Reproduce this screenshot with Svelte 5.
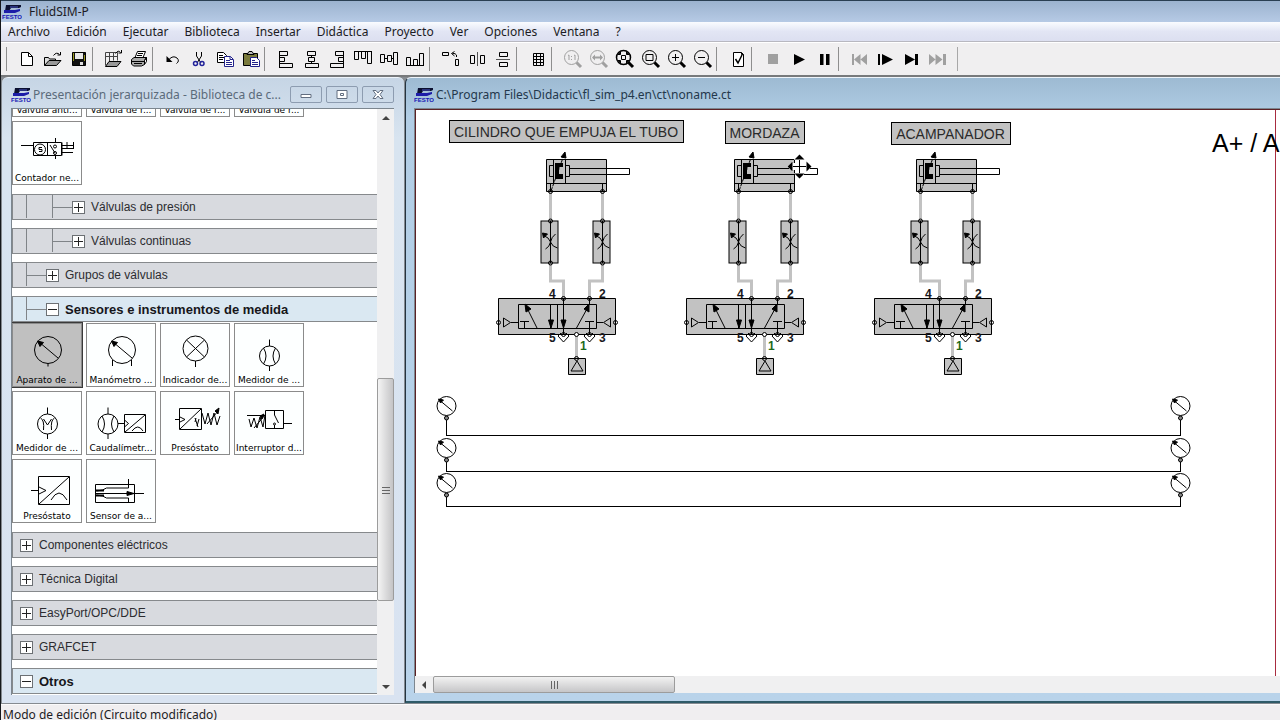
<script lang="ts">
  import { onMount } from 'svelte';

  interface Tool {
    label: string;
    svg: string;
    disabled?: boolean;
  }

  interface Part {
    label: string;
    svg: string;
    selected?: boolean;
  }

  interface Section {
    title: string;
    level: number;
    open?: boolean;
    parts?: Part[];
  }

  const MENU = [
    'Archivo',
    'Edición',
    'Ejecutar',
    'Biblioteca',
    'Insertar',
    'Didáctica',
    'Proyecto',
    'Ver',
    'Opciones',
    'Ventana',
    '?',
  ];

  const LENS = `<circle cx="8.5" cy="8.5" r="7"/><path d="M13.5 13.5 18 18" stroke-width="3"/>`;
  const FOLDER = `<path d="M1.500 16.500v-8h4l1 1.500h6v2" fill="#ddd"/><path d="M1.500 16.500 6 11.500h12l-4.500 5z" fill="#999"/>`;

  const EDIT_TOOLS: Tool[][] = [
    [
      { label: 'Nuevo', svg: `<path d="M4.500 3.500h7l4 4v9h-11z" fill="#fff"/><path d="M11.500 3.500v4h4"/>` },
      { label: 'Abrir', svg: `${FOLDER}<path d="M10.500 6.500q3-4 6-1M17.500 3v3h-3"/>` },
      {
        label: 'Guardar',
        svg: `<path d="M3.500 3.500h13v13h-13z" fill="#111"/><path d="M6 4h8v6H6z" fill="#e8e8e8" stroke="none"/><path d="M4 4h1v8H4zM15 6h1v6h-1z" fill="#9a9a20" stroke="none"/><path d="M11 13h3v3h-3z" fill="#ddd" stroke="none"/>`,
      },
    ],
    [
      {
        label: 'Biblioteca',
        svg: `<path d="M2.500 16.500v-13h12v8M2.500 7.500h12M6.500 3.500v9M10.500 3.500v8" stroke="#444"/><path d="M2.500 17.500 6 12.500h12l-4 5z" fill="#999"/><path d="M12.500 4.500q3-4 5-1M18.500 1v3h-3"/>`,
      },
      {
        label: 'Imprimir',
        svg: `<path d="M6 8.500 8.500 2.500h8L14 8.500z" fill="#fff"/><path d="M9 4.500h5M8 6.500h5" stroke-width="1"/><path d="M2.500 10.500 5 8.500h12.500l-2 3v4l-3 1.500H4.500l-2-2z" fill="#aaa"/><path d="M3 12.500h12M5 14.500h8M15.500 11.500l2-3v4l-2 3"/>`,
      },
    ],
    [
      { label: 'Deshacer', svg: `<path d="M6 10.500q4-4.500 8-1.500 3 3-.5 5.500"/><path d="M3.500 7v6h6z" fill="#000" stroke="none"/>` },
      {
        label: 'Cortar',
        svg: `<path d="M7.500 3v4l4.500 7M12.500 3v4L8 14"/><g stroke="#22229a" stroke-width="1.500"><circle cx="6.500" cy="14.500" r="2"/><circle cx="13" cy="14.500" r="2"/></g>`,
      },
      {
        label: 'Copiar',
        svg: `<path d="M2.500 3.500h6l3 3v7h-9z" fill="#fff"/><path d="M4 6.500h4M4 8.500h5M4 10.500h4"/><g stroke="#22228a"><path d="M9.500 7.500h6l3 3v7h-9z" fill="#fff"/><path d="M15 7.500v3h3M11 11.500h4M11 13.500h6M11 15.500h6"/></g>`,
      },
      {
        label: 'Pegar',
        svg: `<path d="M2.500 4.500h14v12h-14z" fill="#7a7a3c"/><path d="M6 5.500 8 2.500h3l2 3z" fill="#bbb"/><g stroke="#22228a"><path d="M9.500 8.500h6l3 3v6h-9z" fill="#fff"/><path d="M11 11.500h3M11 13.500h6M11 15.500h6"/></g>`,
      },
    ],
    [
      { label: 'Alinear a la izquierda', svg: `<path d="M4.500 2.500h8v4h-8zM4.500 8.500h5v4h-5zM4.500 14.500h13v4h-13zM4.500 2v17"/>` },
      { label: 'Centrar horizontalmente', svg: `<path d="M6.500 2.500h8v4h-8zM7.500 8.500h6v4h-6zM4.500 14.500h13v4h-13zM10.500 6v3M10.500 12v3"/>` },
      { label: 'Alinear a la derecha', svg: `<path d="M8.500 2.500h8v4h-8zM11.500 8.500h5v4h-5zM3.500 14.500h13v4h-13zM16.500 2v17"/>` },
      { label: 'Alinear arriba', svg: `<path d="M1.500 2.500h4v8h-4zM8.500 2.500h4v7h-4zM14.500 2.500h4v12h-4zM1 2.500h18"/>` },
      { label: 'Centrar verticalmente', svg: `<path d="M1.500 5.500h4v8h-4zM8.500 6.500h4v6h-4zM14.500 3.500h4v12h-4zM5 9.500h4M12 9.500h3"/>` },
      { label: 'Alinear abajo', svg: `<path d="M1.500 8.500h4v8h-4zM8.500 10.500h4v6h-4zM14.500 4.500h4v12h-4zM1 16.500h18"/>` },
    ],
  ];

  const VIEW_TOOLS: Tool[][] = [
    [
      { label: 'Girar', svg: `<path d="M1.500 3.500h6v3h-6zM14.500 10.500h3v6h-3z"/><path d="M15.500 8V6q-1-2-4-1.500M13.500 2.500l-3 2 3 2.500"/>` },
      { label: 'Reflejar horizontalmente', svg: `<path d="M3.500 6.500h4v8h-4zM13.500 6.500h4v8h-4z"/><path d="M10.500 3v14" stroke="#555"/>` },
      { label: 'Reflejar verticalmente', svg: `<path d="M6.500 3.500h8v4h-8zM6.500 13.500h8v4h-8z"/><path d="M3 10.500h14" stroke="#555"/>` },
    ],
    [{ label: 'Cuadrícula', svg: `<path d="M5.500 4.500h10v12h-10zM8.500 4v13M12.500 4v13M5 7.500h11M5 10.500h11M5 13.500h11"/>` }],
    [
      {
        label: 'Tamaño original',
        disabled: true,
        svg: `${LENS}<path d="M5 6.500 6 6v5M11 6.500l1-.5v5M8.500 7v1M8.500 10v1"/>`,
      },
      {
        label: 'Vista anterior',
        disabled: true,
        svg: `${LENS}<path d="M4 8.500h9" stroke-width="2"/><path d="m3 8.500 3-3v6zM14 8.500l-3-3v6z" fill="currentColor" stroke="none"/>`,
      },
      {
        label: 'Mostrar todo',
        svg: `<circle cx="8.500" cy="8.500" r="7" stroke-width="1.500"/><path d="M13.500 13.500 18 18" stroke-width="3"/><path d="M6.500 6.500h4v4h-4z"/><path d="M3 5.500 5.500 3v2.500zM14 5.500 11.500 3v2.500zM3 11.500 5.500 14v-2.500zM14 11.500 11.500 14v-2.500z" fill="#000"/>`,
      },
      { label: 'Ampliar área', svg: `${LENS}<path d="M5 5.500h7v6H5z"/>` },
      { label: 'Ampliar', svg: `${LENS}<path d="M5 8.500h7M8.500 5v7"/>` },
      { label: 'Reducir', svg: `${LENS}<path d="M5 8.500h7"/>` },
    ],
    [
      {
        label: 'Comprobar',
        svg: `<path d="M5.500 3.500h8l2 2v12h-10z" fill="#fff"/><path d="M13.500 3.500v2h2"/><path d="m7.500 10 2.500 4 4-8" stroke-width="1.500"/>`,
      },
    ],
    [
      { label: 'Parar', disabled: true, svg: `<path d="M5 5h10v10H5z" fill="currentColor" stroke="none"/>` },
      { label: 'Iniciar', svg: `<path d="m5 5 11 5.500L5 16z" fill="currentColor" stroke="none"/>` },
      { label: 'Pausa', svg: `<path d="M5 5h3.500v11H5zM11 5h3.500v11H11z" fill="currentColor" stroke="none"/>` },
    ],
    [
      {
        label: 'Reiniciar',
        disabled: true,
        svg: `<path d="M2 5h2v11H2zM10.500 5v11L4 10.500zM17 5v11l-6.500-5.500z" fill="currentColor" stroke="none"/>`,
      },
      { label: 'Paso a paso', svg: `<path d="M2 5h2v11H2zM6 5l11 5.500L6 16z" fill="currentColor" stroke="none"/>` },
      { label: 'Hasta el cambio', svg: `<path d="m3 5 10 5.500L3 16zM13 5h3v11h-3z" fill="currentColor" stroke="none"/>` },
      {
        label: 'Tema siguiente',
        disabled: true,
        svg: `<path d="m1 5 6.500 5.500L1 16zM7.500 5l7 5.500-7 5.500zM15 5h3v11h-3z" fill="currentColor" stroke="none"/>`,
      },
    ],
  ];

  // Part symbols are drawn on the 68 x 48 area above the label.
  const METER = `<circle cx="35" cy="26" r="13.500"/><path d="m26 18 19 16"/><path d="m24.500 17 6 1.500-3.500 4z" fill="#000"/>`;

  const SENSORS: Part[] = [
    { label: 'Aparato de ...', selected: true, svg: `${METER}<path d="M35 39.500v3"/>` },
    { label: 'Manómetro ...', svg: `${METER}<path d="M25.500 36v6M44.500 36v6"/>` },
    { label: 'Indicador de...', svg: `<circle cx="34.500" cy="24.500" r="12.500"/><path d="m25.500 16 18 17M43.500 16l-18 17M34.500 37v6"/>` },
    {
      label: 'Medidor de ...',
      svg: `<circle cx="34.500" cy="32" r="10"/><path d="M34.500 15.500V22M34.500 42v5M28.500 24q5 8 0 16M40.500 24q-5 8 0 16"/>`,
    },
    {
      label: 'Medidor de ...',
      svg: `<circle cx="34.500" cy="32" r="10"/><path d="M34.500 15.500V22M34.500 42v5M27.500 26q4 2 3 12M41.500 26q-4 2-3 12M30.500 27l4 6 4-6"/>`,
    },
    {
      label: 'Caudalímetr...',
      svg: `<circle cx="21" cy="32" r="10"/><path d="M21 15.500V22M21 42v5M15 24q5 8 0 16M27 24q-5 8 0 16M31 31.500h6M37.500 22.500h21v18h-21zM37.500 28l4 3.500-4 3.500M38 40l20-17M45 39q6-8 11 0"/>`,
    },
    {
      label: 'Presóstato',
      svg: `<path d="M14 27.500h5M18.500 16.500h22v21h-22zM19 25l5 2.500-5 2.500M19 37l21-20M34 26l3 9M34 30l1-4M36 34l2-7"/><path d="m41 21 3 11 3-11 3 12 3-12 3 12 3-9M46 32l12-14"/><path d="m58 16-1 6-3-3z" fill="#000"/>`,
    },
    {
      label: 'Interruptor d...',
      svg: `<path d="M12 23.500h18M30.500 18.500h18v18h-18zM49 31.500h8M39.500 18v5M39.500 23l4 8M39.500 33v3"/><circle cx="39.500" cy="32" r="1"/><path d="m14 27 2 8 3-9 3 10 3-11 3 10 2-12M19 36l11-13"/><path d="m29 22-4 2 2 3z" fill="#000"/>`,
    },
    { label: 'Presóstato', svg: `<path d="M18 30.500h7M25.500 16.500h31v28h-31zM26 27l7 3.500-7 3.500M26 44l30-27M38 40q8-14 16 0"/>` },
    {
      label: 'Sensor de a...',
      svg: `<path d="M8.500 24.500h39v18h-39zM9 33.500h48M41.500 19v9h-22l-4 2-6 1M41.500 42v-4h-22l-4-2-6-1"/><path d="M9 30.500h8M9 35.500h8" stroke-width="2"/><path d="m47 33.500-7-2v4z" fill="#000"/>`,
    },
  ];

  const SECTIONS: Section[] = [
    { title: 'Válvulas de presión', level: 2 },
    { title: 'Válvulas continuas', level: 2 },
    { title: 'Grupos de válvulas', level: 1 },
    { title: 'Sensores e instrumentos de medida', level: 1, open: true, parts: SENSORS },
    { title: 'Componentes eléctricos', level: 0 },
    { title: 'Técnica Digital', level: 0 },
    { title: 'EasyPort/OPC/DDE', level: 0 },
    { title: 'GRAFCET', level: 0 },
    {
      title: 'Otros',
      level: 0,
      open: true,
      parts: ['Texto', 'Imagen', 'Marco', 'Elipse'].map((label) => ({ label, svg: '' })),
    },
  ];

  const SHUTOFF: Part[] = [
    { label: 'Válvula anti...', svg: '' },
    { label: 'Válvula de r...', svg: '' },
    { label: 'Válvula de r...', svg: '' },
    { label: 'Válvula de r...', svg: '' },
    {
      label: 'Contador ne...',
      svg: `<path d="M8 23.500h12M20.500 20.500h28v13h-28zM34.500 20v14"/><circle cx="27" cy="27.500" r="5.500"/><path d="M29 25.500h-3v2h3v2h-3M42.500 16v5M42.500 33v4M37 23l5 8M49 20.500v13M54 20v7M49 23.500h11M60.500 20v7M49 26.500h11M49 30.500h11"/><circle cx="42" cy="24.500" r="1.500"/><circle cx="42" cy="31" r="1.500"/>`,
    },
  ];

  // x of the 5/2 valve, x of the cylinder
  const STATIONS = [
    { valve: 82, cylinder: 130 },
    { valve: 270, cylinder: 318 },
    { valve: 458, cylinder: 500 },
  ];

  const CAPTIONS = [
    { text: 'CILINDRO QUE EMPUJA EL TUBO', x: 33, y: 10, width: 234 },
    { text: 'MORDAZA', x: 309, y: 11, width: 79 },
    { text: 'ACAMPANADOR', x: 475, y: 12, width: 119 },
  ];

  const LINES = [
    { y: 296, drop: 29 },
    { y: 338, drop: 23 },
    { y: 373, drop: 23 },
  ];

  let tree: HTMLDivElement;

  onMount(() => {
    tree.scrollTop = 57;
  });
</script>

{#snippet logo()}
  <svg class="logo" viewBox="0 0 20 16" aria-hidden="true">
    <path d="M4 1h15v2l-2 1H9L7 7H3z" fill="#0b1030" />
    <path d="M2 6h11l5-1v2l-5 2H2z" fill="#1c1ca8" />
    <path d="M8 3h8" stroke="#4a55c8" />
    <text x="0" y="15">FESTO</text>
  </svg>
{/snippet}

{#snippet toolbar(name: string, groups: Tool[][])}
  <div class="toolbar {name}" role="toolbar">
    {#each groups as group}
      <div class="group">
        {#each group as tool}
          <button class="tool" disabled={tool.disabled} title={tool.label} aria-label={tool.label}>
            <svg viewBox="0 0 20 20" aria-hidden="true">{@html tool.svg}</svg>
          </button>
        {/each}
      </div>
    {/each}
  </div>
{/snippet}

{#snippet partGrid(parts: Part[])}
  <div class="parts">
    {#each parts as part}
      <button class="part" class:selected={part.selected}>
        <svg viewBox="0 0 68 50" aria-hidden="true">{@html part.svg}</svg>
        <span>{part.label}</span>
      </button>
    {/each}
  </div>
{/snippet}

{#snippet throttle(x: number)}
  <g transform="translate({x} 111)">
    <rect x="-9.5" y="0" width="17" height="42" class="body" />
    <path d="M0 0v42M-5 28q4-2 5-7 1-5 5-8M7 27q-5-1-7-6-2-5-6-6" />
    <path d="m-8 12 5 1-4 4z" fill="#000" />
    <circle r="2" />
    <circle cy="42" r="2" />
  </g>
{/snippet}

{#snippet gauge(x: number, y: number, drop: number)}
  <g transform="translate({x} {y})">
    <circle r="9.5" />
    <path d="m-6-5 12 10" />
    <path d="m-8-7 5 1-3 3z" fill="#000" />
    <path d="M0 10v{drop}" />
    <circle cy="12" r="2" fill="#888" />
  </g>
{/snippet}

<div class="app">
  <header class="titlebar">
    {@render logo()}
    <h1>FluidSIM-P</h1>
  </header>

  <nav class="menu">
    {#each MENU as item}
      <button>{item}</button>
    {/each}
  </nav>

  <div class="toolbars">
    {@render toolbar('edit', EDIT_TOOLS)}
    {@render toolbar('view', VIEW_TOOLS)}
  </div>

  <main class="desktop">
    <section class="window library">
      <div class="caption">
        {@render logo()}
        <h2>Presentación jerarquizada - Biblioteca de c...</h2>
        <div class="controls">
          <button aria-label="Minimizar"><svg viewBox="0 0 12 12"><path d="M1 5.500h10v3H1z" /></svg></button>
          <button aria-label="Maximizar"><svg viewBox="0 0 12 12"><path d="M1 1.500h10v8H1zM4.500 4.500h3v2h-3z" /></svg></button>
          <button aria-label="Cerrar"
            ><svg viewBox="0 0 12 12"><path d="M1 1.500h3l2 2.500 2-2.500h3l-3 4 3 4H8L6 7 4 9.500H1l3-4z" /></svg></button
          >
        </div>
      </div>
      <div class="client">
        <div class="tree" bind:this={tree}>
          {@render partGrid(SHUTOFF)}
          {#each SECTIONS as section, i}
            <button class="section" class:open={section.open} class:spaced={i > 0 && !SECTIONS[i - 1].parts}>
              {#each { length: section.level } as _, level}
                <svg class="guide" viewBox="0 0 26 24" aria-hidden="true">
                  <path d={level === section.level - 1 ? 'M13.5 0v23M13.500 12.500H33' : 'M13.500 0v23'} />
                </svg>
              {/each}
              <svg class="toggle" viewBox="0 0 26 24" aria-hidden="true">
                <rect x="7.500" y="6.500" width="12" height="12" />
                <path d={section.open ? 'M9 12.500h9' : 'M9 12.500h9M13.500 8v9'} />
              </svg>
              <span>{section.title}</span>
            </button>
            {#if section.parts}
              {@render partGrid(section.parts)}
            {/if}
          {/each}
        </div>
        <div class="scrollbar vertical">
          <button aria-label="Subir"><svg viewBox="0 0 8 8"><path d="m0 6 4-4 4 4z" /></svg></button>
          <div class="before"></div>
          <div class="thumb"><svg viewBox="0 0 8 8"><path d="M0 1.500h8M0 4.500h8M0 7.500h8" /></svg></div>
          <div class="after"></div>
          <button aria-label="Bajar"><svg viewBox="0 0 8 8"><path d="m0 2 4 4 4-4z" /></svg></button>
        </div>
      </div>
    </section>

    <section class="window document">
      <div class="caption">
        {@render logo()}
        <h2>C:\Program Files\Didactic\fl_sim_p4.en\ct\noname.ct</h2>
      </div>
      <div class="client">
        <svg class="canvas" role="img" aria-label="Circuito neumático">
          <path class="page-edge" d="M859.500 0v2000" />

          {#each CAPTIONS as caption}
            <g transform="translate({caption.x} {caption.y})">
              <rect x=".5" y=".5" width={caption.width} height="22" class="body" />
              <text class="label" x={caption.width / 2} y="17">{caption.text}</text>
            </g>
          {/each}

          {#each STATIONS as { valve, cylinder }}
            <g class="hose">
              <path d="M{cylinder + 4.5} 82v89h{valve + 65.500 - cylinder - 4.500}v18" />
              <path d="M{cylinder + 56.5} 82v89H{valve + 91.5}v18" />
              <path d="M{valve + 78.5} 225v23" />
            </g>

            <g transform="translate({cylinder} 0)">
              <path class="body" d="M.5 49.500h60v32H.5z" />
              <path d="M.5 73.500h60M7.500 50v23M19.500 50v23M3.500 55.500h4v11h-4zM19.500 55.500h4v11h-4zM4.500 73v8M56.500 73v8" />
              <path d="M23.500 58.500h60v6h-60z" />
              <path d="M61 59h22v5H61z" fill="#fff" stroke="none" />
              <path d="M9 53h8v4h-4v7h4v5H9z" fill="#000" stroke="none" />
              <path d="M5 81 18 45" stroke-dasharray="4 1" />
              <path d="m19 42 1 6-5-1z" fill="#000" />
              <circle cx="4.500" cy="81.500" r="2" />
              <circle cx="56.500" cy="81.500" r="2" />
            </g>
            {@render throttle(cylinder + 4.5)}
            {@render throttle(cylinder + 56.5)}

            <g transform="translate({valve} 188)">
              <path class="body" d="M.5.5h117v36H.5z" />
              <path d="M20.500 6.500h78v24h-78zM59.500 6v24M39 30 28 8M52.500 6v24M65.500 0v36M78.500 30 90 9M91.500 6V0M22 23.500h9M26.500 24v6M87 23.500h9M91.500 24v12" />
              <path d="m27 6 6 5-5 3zM50.500 22h5l-2.500 8zM63 22h5l-2.500 8zM91 6v8l-5-3z" fill="#000" />
              <path d="M5.500 20v9l7-4.500zM13 24.500h7M112.500 20v9l-7-4.500zM105 24.500h-7M60 38l5.500 6 5.500-6-3-3M86 38l5.500 6 5.500-6-3-3M60 38l3-3M86 38l3-3" />
              <circle cx=".5" cy="24.500" r="2" />
              <circle cx="117.500" cy="24.500" r="2" />
              <circle cx="65.500" cy=".5" r="2" />
              <circle cx="91.500" cy=".5" r="2" />
              <circle cx="65.500" cy="36.500" r="2" />
              <circle cx="78.500" cy="36.500" r="2" class="open-port" />
              <circle cx="91.500" cy="36.500" r="2" />
              <text x="51" y="0">4</text>
              <text x="101" y="0">2</text>
              <text x="51" y="44">5</text>
              <text x="101" y="44">3</text>
              <text x="82" y="52" class="supply">1</text>
              <path class="body" d="M70.500 60.500h17v16h-17z" />
              <path d="m79 63 6 10H73z" />
              <circle cx="78.500" cy="60.500" r="2" />
            </g>
          {/each}

          {#each LINES as { y, drop }}
            {@render gauge(30.5, y, drop - 9)}
            {@render gauge(764.5, y, drop - 9)}
            <path d="M30 {y + drop + 0.5}h735" />
          {/each}

          <text class="sequence" x="796" y="42">A+ / A</text>

          <g class="cursor" transform="translate(383.5 56.5)">
            <path class="halo" d="M-8 0H8M0-8V8" />
            <path d="M-8 0H8M0-8V8" />
            <path class="head" d="m0-12 5 5H-5zM0 12l5-5H-5zM-12 0l5-5V5zM12 0 7-5V5z" />
          </g>
        </svg>
        <div class="scrollbar horizontal">
          <button aria-label="Izquierda"><svg viewBox="0 0 8 8"><path d="M6 0 2 4l4 4z" /></svg></button>
          <div class="thumb"><svg viewBox="0 0 8 8"><path d="M1.500 0v8M4.500 0v8M7.500 0v8" /></svg></div>
        </div>
      </div>
    </section>
  </main>

  <footer class="status">Modo de edición (Circuito modificado)</footer>
</div>

<style>
  :global(body) {
    background: #f0eef0;
    overflow: hidden;
  }

  .app {
    height: 100vh;
    display: flex;
    flex-direction: column;
    border-left: 1px solid #15181c;
    box-sizing: border-box;
    overflow: hidden;
    font-family: 'Noto Sans', 'Open Sans', sans-serif;
    font-size: 12px;
    color: #1c1c24;
  }

  button {
    margin: 0;
    padding: 0;
    border: none;
    background: none;
    font: inherit;
    color: inherit;
  }

  svg {
    display: block;
    fill: none;
    stroke: #000;
  }

  h1,
  h2 {
    margin: 0;
    font-size: 12px;
    font-weight: 400;
    white-space: nowrap;
  }

  .logo {
    width: 20px;
    height: 16px;
    flex-shrink: 0;
    stroke: none;
  }

  .logo text {
    font-family: 'Liberation Sans', sans-serif;
    font-size: 6px;
    font-weight: 700;
    fill: #1414b4;
  }

  .titlebar {
    height: 21px;
    display: flex;
    align-items: center;
    gap: 7px;
    padding-left: 1px;
    border-top: 1px solid #2a3f52;
    background: linear-gradient(#9cb3cf, #b6cae5);
    flex-shrink: 0;
  }

  .menu {
    height: 19px;
    display: flex;
    align-items: center;
    gap: 16px;
    padding-left: 7px;
    background: linear-gradient(#fafcff, #e2e5f4 50%, #dcdff0);
    border-bottom: 1px solid #b8b8c0;
    flex-shrink: 0;
  }

  .toolbars {
    height: 32px;
    display: flex;
    align-items: center;
    padding-left: 5px;
    background: #f0eff0;
    border-top: 1px solid #fff;
    border-bottom: 2px solid #77797b;
    flex-shrink: 0;
  }

  .toolbar {
    display: flex;
  }

  .toolbar.edit {
    padding-right: 1px;
  }

  .toolbar.view {
    padding-right: 6px;
    border-right: 1px solid #a8a8a8;
  }

  .group {
    display: flex;
    border-left: 1px solid #8e8e8e;
  }

  .edit .group {
    padding: 0 0 0 7px;
  }

  .view .group {
    padding: 0 0 0 8px;
  }

  .tool {
    width: 26px;
    height: 24px;
    display: grid;
    place-items: center;
    color: #000;
  }

  .tool svg {
    width: 20px;
    height: 20px;
    stroke: currentColor;
  }

  .tool:disabled {
    color: #a0a0a0;
  }

  .desktop {
    flex: 1;
    min-height: 0;
    display: flex;
    gap: 1px;
    padding: 0 0 1px 1px;
    background: #858a90;
  }

  .window {
    display: flex;
    flex-direction: column;
    box-sizing: border-box;
    border-top: 1px solid #eef4fa;
    border-radius: 6px 6px 0 0;
  }

  .caption {
    height: 30px;
    display: flex;
    align-items: center;
    box-sizing: border-box;
    padding-top: 3px;
    flex-shrink: 0;
  }

  .caption h2 {
    margin-left: 2px;
  }

  .library {
    width: 402px;
    flex-shrink: 0;
    padding: 0 10px 8px 9px;
    background: linear-gradient(#c6d5e5, #d8e4f0 60px, #d9e3f1);
  }

  .library h2 {
    flex: 1;
    color: #5b6b7b;
  }

  .controls {
    display: flex;
    gap: 4px;
  }

  .controls button {
    width: 32px;
    height: 17px;
    display: grid;
    place-items: center;
    box-sizing: border-box;
    border: 1px solid #8d9cb0;
    border-radius: 2px;
  }

  .controls svg {
    width: 12px;
    height: 12px;
    fill: #fff;
    stroke: #626e80;
  }

  .client {
    flex: 1;
    min-height: 0;
    display: flex;
    background: #fff;
    border: 1px solid #7c868f;
    border-right: none;
    border-bottom: none;
  }

  .tree {
    flex: 1;
    min-width: 0;
    overflow: hidden;
    font-family: 'Liberation Sans', Arial, sans-serif;
  }

  .section {
    width: 100%;
    height: 26px;
    display: flex;
    align-items: center;
    box-sizing: border-box;
    border: 1px solid #86898c;
    border-right: none;
    background: #d8dadf;
    font-size: 12px;
    color: #2c2c30;
  }

  .section.spaced {
    margin-top: 8px;
  }

  .section.open {
    background: #dae8f2;
    font-size: 13px;
    font-weight: 700;
    color: #16161a;
  }

  .guide,
  .toggle {
    width: 26px;
    height: 24px;
    flex-shrink: 0;
    overflow: visible;
    stroke: #808488;
  }

  .toggle rect {
    fill: #fff;
    stroke: #6c7074;
  }

  .toggle path {
    stroke: #222;
  }

  .parts {
    display: grid;
    grid-template-columns: repeat(4, 70px);
    gap: 4px;
    padding: 1px 0 9px;
  }

  .part {
    height: 64px;
    display: flex;
    flex-direction: column;
    align-items: center;
    box-sizing: border-box;
    border: 1px solid #8b8b8b;
    background: #fdffff;
    font-family: 'DejaVu Sans', Verdana, sans-serif;
    font-size: 9px;
    line-height: 12px;
    white-space: nowrap;
    color: #000;
  }

  .part.selected {
    background: #c0c0c0;
    outline: 1px solid #3a3a3a;
  }

  .part svg {
    width: 68px;
    height: 50px;
  }

  .scrollbar {
    display: flex;
    background: #f0f0f1;
    flex-shrink: 0;
  }

  .scrollbar button,
  .thumb {
    display: grid;
    place-items: center;
  }

  .scrollbar svg {
    width: 8px;
    height: 8px;
    stroke: none;
    fill: #444;
  }

  .thumb {
    border: 1px solid #9c9c9c;
    border-radius: 2px;
    box-sizing: border-box;
  }

  .scrollbar .thumb svg {
    stroke: #666;
  }

  .vertical {
    width: 17px;
    flex-direction: column;
  }

  .vertical button {
    height: 17px;
  }

  .vertical .before {
    flex: 253;
  }

  .vertical .thumb {
    flex: 223;
    background: linear-gradient(90deg, #f4f4f4, #c4c4c6);
  }

  .vertical .after {
    flex: 77;
  }

  .document {
    flex: 1;
    min-width: 0;
    padding: 0 0 8px 8px;
    border-left: 1px solid #24333f;
    border-bottom: 2px solid #2f5a68;
    border-top-right-radius: 0;
    background: linear-gradient(#9dbad2, #b2cee6 40px, #b9d3ea);
  }

  .document h2 {
    color: #24384c;
  }

  .document .client {
    flex-direction: column;
  }

  .canvas {
    flex: 1;
    min-height: 0;
    width: 100%;
    border: solid #5c2226;
    border-width: 1px 0 0 1px;
    box-sizing: border-box;
    overflow: hidden;
    font-family: 'Liberation Sans', Arial, sans-serif;
  }

  .canvas text {
    stroke: none;
    fill: #181820;
    font-size: 12px;
    font-weight: 700;
  }

  .canvas .label {
    font-size: 14px;
    font-weight: 400;
    text-anchor: middle;
    fill: #2a2a2a;
  }

  .canvas .sequence {
    font-size: 25px;
    font-weight: 400;
    fill: #000;
  }

  .canvas .supply {
    fill: #1c6a1c;
  }

  .body {
    fill: #c2c2c2;
  }

  .hose {
    stroke: #c2c2c2;
    stroke-width: 3;
  }

  .open-port {
    fill: #fff;
  }

  .page-edge {
    stroke: #a82c40;
  }

  .cursor .halo {
    stroke: #fff;
    stroke-width: 7;
    stroke-dasharray: 7 2;
  }

  .cursor .head {
    fill: #000;
    stroke: #fff;
    paint-order: stroke;
  }

  .horizontal {
    height: 17px;
  }

  .horizontal button {
    width: 18px;
  }

  .horizontal .thumb {
    width: 28%;
    background: linear-gradient(#f2f2f2, #c6c6c8);
  }

  .status {
    height: 16px;
    padding-left: 2px;
    border-top: 1px solid #fbfafb;
    background: #f0eef0;
    font-size: 12px;
    line-height: 20px;
    overflow: hidden;
    flex-shrink: 0;
    box-sizing: border-box;
  }
</style>
